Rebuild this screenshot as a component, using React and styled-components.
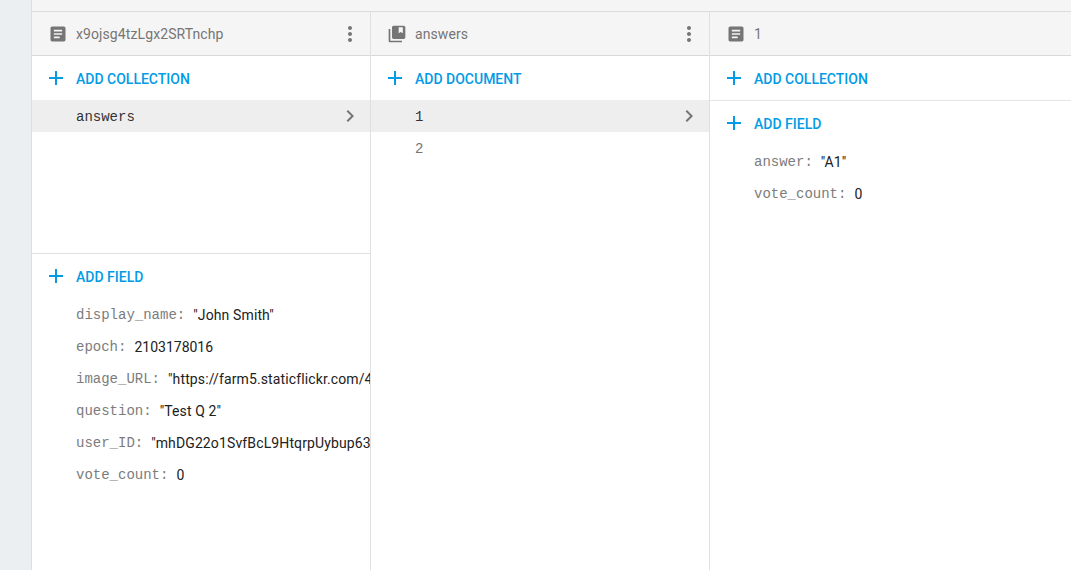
import React from "react";
import styled, { createGlobalStyle } from "styled-components";

const Global = createGlobalStyle`
  html, body { margin: 0; padding: 0; height: 100%; background: #fff; overflow: hidden; }
  #root { height: 570px; }
`;

const Page = styled.div`
  display: flex;
  width: 1071px;
  height: 570px;
  font-family: Roboto, "Liberation Sans", sans-serif;
  overflow: hidden;
`;
const Rail = styled.div`
  width: 31px;
  flex: none;
  background: #eceff1;
  border-right: 1px solid #dcdfe1;
`;
const Main = styled.div`
  flex: 1;
  min-width: 0;
  display: flex;
  flex-direction: column;
`;
const TopStrip = styled.div`
  height: 11px;
  flex: none;
  background: #f5f5f5;
  border-bottom: 1px solid #dcdcdc;
`;
const Columns = styled.div`
  flex: 1;
  display: flex;
  min-height: 0;
`;
const Column = styled.section`
  width: ${p => p.$w}px;
  flex: none;
  box-sizing: border-box;
  display: flex;
  flex-direction: column;
  overflow: hidden;
  border-right: ${p => (p.$last ? "none" : "1px solid #e0e0e0")};
`;
const Header = styled.header`
  height: 43px;
  flex: none;
  display: flex;
  align-items: center;
  background: #f5f5f5;
  border-bottom: 1px solid #d9d9d9;
  padding-left: 16px;
  padding-right: 8px;
`;
const HeaderIcon = styled.svg`
  width: 20px;
  height: 20px;
  margin-right: 8px;
  flex: none;
  fill: #757575;
`;
const HeaderTitle = styled.span`
  flex: 1;
  font-size: 14px;
  color: #757575;
  letter-spacing: 0.1px;
`;
const MenuIcon = styled.svg`
  width: 24px;
  height: 24px;
  fill: #757575;
  flex: none;
`;
const AddRow = styled.div`
  height: ${p => p.$h || 44}px;
  flex: none;
  box-sizing: border-box;
  display: flex;
  align-items: center;
  padding-left: 16px;
  border-bottom: ${p => (p.$line ? "1px solid #e6e6e6" : "none")};
`;
const AddIcon = styled.svg`
  width: 16px;
  height: 16px;
  margin-right: 12px;
  fill: #039be5;
  flex: none;
`;
const AddLabel = styled.span`
  font-size: 14px;
  font-weight: 500;
  color: #039be5;
  margin-top: 2px;
`;
const List = styled.div`
  height: ${p => p.$h}px;
  flex: none;
  border-bottom: ${p => (p.$line ? "1px solid #e0e0e0" : "none")};
`;
const ListRow = styled.div`
  height: 32px;
  display: flex;
  align-items: center;
  padding-left: 44px;
  padding-right: 8px;
  background: ${p => (p.$active ? "#eeeeee" : "transparent")};
  color: ${p => (p.$active ? "#333" : "#757575")};
  font-family: "Liberation Mono", monospace;
  font-size: 14px;
`;
const RowText = styled.span`
  flex: 1;
  padding-top: 2px;
`;
const Chevron = styled.svg`
  width: 24px;
  height: 24px;
  fill: #757575;
  flex: none;
`;
const Fields = styled.div`
  overflow: hidden;
`;
const Field = styled.div`
  height: 32px;
  box-sizing: border-box;
  padding: 2px 0 0 44px;
  display: flex;
  align-items: center;
  white-space: nowrap;
  font-size: 14px;
`;
const Key = styled.span`
  font-family: "Liberation Mono", monospace;
  color: #7c7c7c;
  margin-right: 8px;
`;
const Value = styled.span`
  color: #212121;
  letter-spacing: ${p => (p.$string ? "0.12px" : "0")};
`;

const DocIcon = () => (
  <HeaderIcon viewBox="0 0 24 24">
    <path d="M19 3H5c-1.100 0-2 .9-2 2v14c0 1.100.9 2 2 2h14c1.100 0 2-.9 2-2V5c0-1.100-.9-2-2-2zm-5 14H7v-2h7v2zm3-4H7v-2h10v2zm0-4H7V7h10v2z" />
  </HeaderIcon>
);
const CollectionIcon = () => (
  <HeaderIcon viewBox="0 0 24 24">
    <path d="M4 6H2v14c0 1.100.9 2 2 2h14v-2H4V6zm16-4H8c-1.100 0-2 .9-2 2v12c0 1.100.9 2 2 2h12c1.100 0 2-.9 2-2V4c0-1.100-.9-2-2-2zm-1 9-2.500-1.500L14 11V4h5v7z" />
  </HeaderIcon>
);
const Menu = () => (
  <MenuIcon viewBox="0 0 24 24">
    <path d="M12 8c1.100 0 2-.9 2-2s-.9-2-2-2-2 .9-2 2 .9 2 2 2zm0 2c-1.100 0-2 .9-2 2s.9 2 2 2 2-.9 2-2-.9-2-2-2zm0 6c-1.100 0-2 .9-2 2s.9 2 2 2 2-.9 2-2-.9-2-2-2z" />
  </MenuIcon>
);
const Arrow = () => (
  <Chevron viewBox="0 0 24 24">
    <path d="M10 6 8.590 7.410 13.170 12l-4.580 4.590L10 18l6-6z" />
  </Chevron>
);
const Add = ({ label, h, line }) => (
  <AddRow $h={h} $line={line}>
    <AddIcon viewBox="0 0 16 16">
      <path d="M15 9H9v6H7V9H1V7h6V1h2v6h6z" />
    </AddIcon>
    <AddLabel>{label}</AddLabel>
  </AddRow>
);
const FieldRows = ({ rows }) => (
  <Fields>
    {rows.map(([k, v]) => (
      <Field key={k}>
        <Key>{k}</Key>
        <Value $string={v.startsWith('"')}>{v}</Value>
      </Field>
    ))}
  </Fields>
);

const rootFields = [
  ["display_name:", "\"John Smith\""],
  ["epoch:", "2103178016"],
  ["image_URL:", "\"https://farm5.staticflickr.com/4"],
  ["question:", "\"Test Q 2\""],
  ["user_ID:", "\"mhDG22o1SvfBcL9HtqrpUybup63"],
  ["vote_count:", "0"],
];
const docFields = [
  ["answer:", "\"A1\""],
  ["vote_count:", "0"],
];

export default function App() {
  return (
    <Page>
      <Global />
      <Rail />
      <Main>
        <TopStrip />
        <Columns>
          <Column $w={339}>
            <Header>
              <DocIcon />
              <HeaderTitle>x9ojsg4tzLgx2SRTnchp</HeaderTitle>
              <Menu />
            </Header>
            <Add label="ADD COLLECTION" />
            <List $h={153} $line>
              <ListRow $active>
                <RowText>answers</RowText>
                <Arrow />
              </ListRow>
            </List>
            <Add label="ADD FIELD" />
            <FieldRows rows={rootFields} />
          </Column>
          <Column $w={339}>
            <Header>
              <CollectionIcon />
              <HeaderTitle>answers</HeaderTitle>
              <Menu />
            </Header>
            <Add label="ADD DOCUMENT" />
            <List $h={64}>
              <ListRow $active>
                <RowText>1</RowText>
                <Arrow />
              </ListRow>
              <ListRow>
                <RowText>2</RowText>
              </ListRow>
            </List>
          </Column>
          <Column $w={361} $last>
            <Header>
              <DocIcon />
              <HeaderTitle>1</HeaderTitle>
            </Header>
            <Add label="ADD COLLECTION" h={45} line />
            <Add label="ADD FIELD" />
            <FieldRows rows={docFields} />
          </Column>
        </Columns>
      </Main>
    </Page>
  );
}
